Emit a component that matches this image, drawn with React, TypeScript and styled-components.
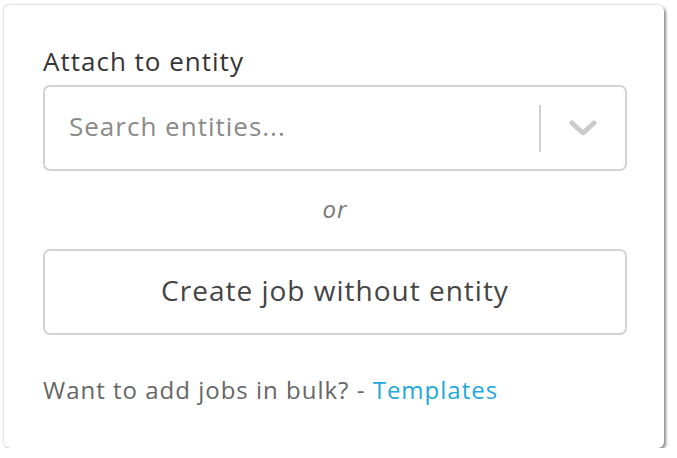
import React from 'react';
import styled, { createGlobalStyle } from 'styled-components';

const GlobalStyle = createGlobalStyle`
  html, body {
    margin: 0;
    padding: 0;
    background: #ffffff;
  }
  body {
    font-family: "Open Sans", Lato, sans-serif;
    letter-spacing: 1px;
  }
`;

const Card = styled.div`
  box-sizing: border-box;
  width: 660px;
  height: 443px;
  margin: 5px 0 0 4px;
  padding: 41px 37px 0 39px;
  background: #fff;
  border-radius: 6px;
  box-shadow: 2px 2px 3px rgba(0, 0, 0, 0.45), -1px -1px 2px rgba(0, 0, 0, 0.12);
  display: flex;
  flex-direction: column;
`;

const Label = styled.label`
  font-size: 26px;
  line-height: 30px;
  color: #353535;
  margin-bottom: 9px;
`;

const Select = styled.div`
  box-sizing: border-box;
  height: 86px;
  border: 2px solid #d3d3d3;
  border-radius: 7px;
  display: flex;
  align-items: center;
  padding: 0 0 0 22px;
`;

const SearchInput = styled.input`
  flex: 1;
  border: none;
  outline: none;
  background: transparent;
  font-family: inherit;
  letter-spacing: inherit;
  font-size: 26px;
  color: #333;
  margin-bottom: 4px;
  &::placeholder {
    color: #8a8a8a;
  }
`;

const Separator = styled.span`
  width: 2px;
  height: 47px;
  background: #d0d0d0;
`;

const ChevronBox = styled.div`
  width: 84px;
  display: flex;
  align-items: center;
  justify-content: center;
`;

const Or = styled.div`
  box-sizing: border-box;
  height: 78px;
  padding-bottom: 4px;
  display: flex;
  align-items: center;
  justify-content: center;
  font-style: italic;
  font-size: 24px;
  color: #777;
`;

const Button = styled.button`
  box-sizing: border-box;
  height: 86px;
  padding: 0 0 5px;
  border: 2px solid #d3d3d3;
  border-radius: 7px;
  background: #fff;
  font-family: inherit;
  letter-spacing: inherit;
  font-size: 28px;
  color: #444;
  cursor: pointer;
`;

const Footer = styled.p`
  margin: 40px 0 0;
  font-size: 24px;
  line-height: 30px;
  color: #666;
`;

const Link = styled.a`
  color: #1fa8dc;
  text-decoration: none;
`;

function Chevron() {
  return (
    <svg width="28" height="16" viewBox="0 0 28 16">
      <path d="M3 3 L14 13 L25 3" fill="none" stroke="#cbcbcb" strokeWidth="5" strokeLinecap="round" strokeLinejoin="round" />
    </svg>
  );
}

export default function App() {
  return (
    <>
      <GlobalStyle />
      <Card>
        <Label>Attach to entity</Label>
        <Select>
          <SearchInput placeholder="Search entities..." />
          <Separator />
          <ChevronBox>
            <Chevron />
          </ChevronBox>
        </Select>
        <Or>or</Or>
        <Button type="button">Create job without entity</Button>
        <Footer>
          Want to add jobs in bulk? - <Link href="#">Templates</Link>
        </Footer>
      </Card>
    </>
  );
}
